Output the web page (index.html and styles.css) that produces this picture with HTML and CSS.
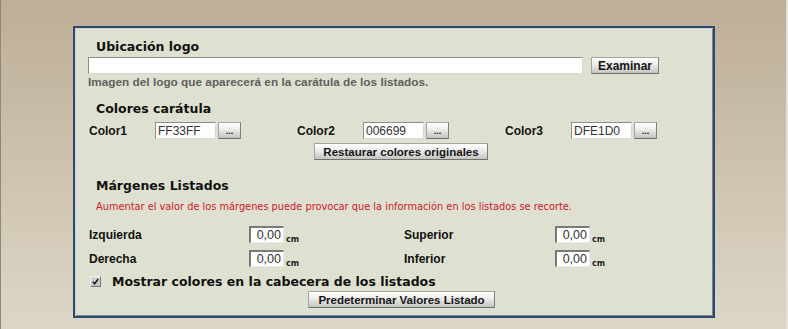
FILE: index.html
```html
<!DOCTYPE html>
<html lang="es">
<head>
  <meta charset="UTF-8" />
  <title>Configuración listados</title>
  <link rel="stylesheet" href="styles.css">
</head>
<body>

  <div class="panel">

    <h3 class="heading first">Ubicación logo</h3>
    <div class="file-row">
      <input type="text" class="field file-field">
      <button class="btn examinar">Examinar</button>
    </div>
    <p class="hint">Imagen del logo que aparecerá en la carátula de los listados.</p>

    <h3 class="heading colores">Colores carátula</h3>
    <div class="color-row">
      <div class="color-group">
        <span class="label">Color1</span>
        <input type="text" class="field color-field" value="FF33FF">
        <button class="btn dots">...</button>
      </div>
      <div class="color-group">
        <span class="label">Color2</span>
        <input type="text" class="field color-field" value="006699">
        <button class="btn dots">...</button>
      </div>
      <div class="color-group">
        <span class="label">Color3</span>
        <input type="text" class="field color-field" value="DFE1D0">
        <button class="btn dots">...</button>
      </div>
    </div>
    <button class="btn restaurar">Restaurar colores originales</button>

    <h3 class="heading margenes">Márgenes Listados</h3>
    <p class="warning">Aumentar el valor de los márgenes puede provocar que la información en los listados se recorte.</p>

    <div class="margin-grid">
      <span class="label">Izquierda</span>
      <span class="measure"><input type="text" class="field num-field" value="0,00"><span class="unit">cm</span></span>
      <span class="label">Superior</span>
      <span class="measure"><input type="text" class="field num-field" value="0,00"><span class="unit">cm</span></span>
      <span class="label">Derecha</span>
      <span class="measure"><input type="text" class="field num-field" value="0,00"><span class="unit">cm</span></span>
      <span class="label">Inferior</span>
      <span class="measure"><input type="text" class="field num-field" value="0,00"><span class="unit">cm</span></span>
    </div>

    <div class="check-row">
      <span class="check-box">
        <svg width="9" height="9" viewBox="0 0 9 9"><path d="M1.8 4.6 L3.6 6.8 L7.2 2" fill="none" stroke="#1a1a1a" stroke-width="1.5"/></svg>
      </span>
      <span class="check-text">Mostrar colores en la cabecera de los listados</span>
    </div>
    <button class="btn predeterminar">Predeterminar Valores Listado</button>

  </div>

</body>
</html>
```

FILE: styles.css
```css
* {
  margin: 0;
  padding: 0;
  box-sizing: border-box;
}

html, body {
  height: 100%;
}

body {
  background: linear-gradient(to bottom, #bdae96 0%, #cdc2ae 50%, #ddd6c7 100%);
  border-left: 1px solid #8f877a;
  border-right: 2px solid #e6e0d4;
  overflow: hidden;
  font-family: "Liberation Sans", Arial, sans-serif;
  padding: 26px 0 0 72px;
}

.panel {
  width: 642px;
  height: 292px;
  background-color: #dfe1d0;
  border: 2px solid #2b4a6c;
  box-shadow: inset 1px 1px 0 #c8d0d8, inset -1px -1px 0 #6f86a0;
  padding: 0 0 0 13px;
  display: flex;
  flex-direction: column;
  align-items: flex-start;
}

.heading {
  font-family: "DejaVu Sans", Verdana, sans-serif;
  font-weight: bold;
  font-size: 12.5px;
  line-height: 16px;
  height: 16px;
  color: #111;
  margin-left: 8px;
}

.heading.first {
  margin-top: 11px;
}

.heading.colores {
  margin-top: 12px;
}

.heading.margenes {
  margin-top: 18px;
}

.field {
  background: #fff;
  border: 1px solid;
  border-color: #8c8c8c #d8d8d8 #d8d8d8 #8c8c8c;
  font-family: "Liberation Sans", Arial, sans-serif;
  font-size: 12px;
  color: #333;
  outline: none;
}

.btn {
  background: linear-gradient(to bottom, #ffffff 0%, #eeeeec 40%, #c4c4c0 100%);
  border: 1px solid #a5a5a0;
  border-right-color: #7f7f7c;
  border-bottom-color: #6f6f6c;
  font-family: "Liberation Sans", Arial, sans-serif;
  font-weight: bold;
  font-size: 11.5px;
  color: #151515;
  height: 17px;
  line-height: 14px;
  padding: 0;
  white-space: nowrap;
}

.file-row {
  display: flex;
  align-items: flex-start;
  margin-top: 2px;
  height: 17px;
}

.file-field {
  width: 495px;
  height: 17px;
}

.examinar {
  margin-left: 8px;
  width: 68px;
  font-size: 12px;
}

.hint {
  margin-top: 1px;
  font-weight: bold;
  font-size: 11.8px;
  line-height: 14px;
  color: #5f5f5f;
}

.color-row {
  display: flex;
  margin-top: 5px;
  height: 17px;
  padding-left: 1px;
}

.color-group {
  width: 208px;
  display: flex;
  align-items: center;
}

.label {
  font-weight: bold;
  font-size: 12px;
  color: #111;
}

.color-group .label {
  width: 66px;
}

.color-field {
  width: 61px;
  height: 17px;
  padding-left: 2px;
}

.dots {
  margin-left: 2px;
  width: 23px;
  font-size: 9px;
}

.restaurar {
  margin: 4px 0 0 226px;
  width: 174px;
}

.warning {
  margin: 6px 0 0 8px;
  font-family: "DejaVu Sans", Verdana, sans-serif;
  font-size: 9.8px;
  line-height: 14px;
  color: #d0142a;
}

.margin-grid {
  display: grid;
  grid-template-columns: 160px 155px 151px auto;
  grid-auto-rows: 17px;
  row-gap: 7px;
  align-items: center;
  margin-top: 12px;
  padding-left: 1px;
}

.measure {
  display: flex;
  align-items: flex-end;
}

.num-field {
  width: 35px;
  height: 17px;
  text-align: right;
  padding-right: 2px;
  font-size: 12.5px;
  border-width: 2px 1px 1px 2px;
  border-color: #7a7a7a #e8e8e8 #e8e8e8 #7a7a7a;
}

.unit {
  font-family: "DejaVu Sans", Verdana, sans-serif;
  font-size: 8px;
  font-weight: bold;
  color: #222;
  margin: 0 0 -1px 2px;
}

.check-row {
  display: flex;
  align-items: center;
  margin-top: 6px;
  height: 16px;
  padding-left: 2px;
}

.check-box {
  width: 11px;
  height: 11px;
  background: linear-gradient(to bottom, #d8d8d8, #bdbdbd);
  border: 1px solid;
  border-color: #f4f4f4 #7a7a7a #7a7a7a #f4f4f4;
  display: flex;
  align-items: center;
  justify-content: center;
}

.check-text {
  margin-left: 11px;
  font-family: "DejaVu Sans", Verdana, sans-serif;
  font-weight: bold;
  font-size: 12.5px;
  color: #111;
}

.predeterminar {
  margin: 2px 0 0 220px;
  width: 187px;
}
```
